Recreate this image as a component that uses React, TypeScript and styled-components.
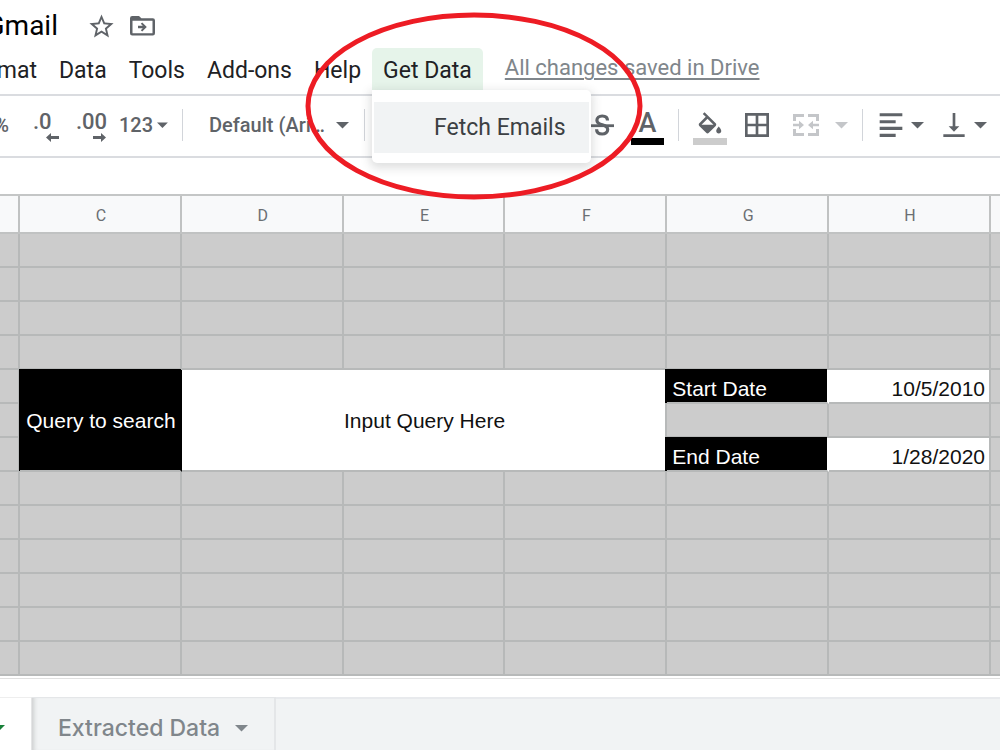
import React from 'react';
import styled, { createGlobalStyle } from 'styled-components';

const GlobalStyle = createGlobalStyle`
  *, *::before, *::after { box-sizing: border-box; }
  body { margin: 0; background: #fff; }
  button, select { font: inherit; color: inherit; background: none; border: 0; padding: 0; margin: 0; cursor: pointer; }
  svg { display: block; }
`;

const Page = styled.div`
  position: relative;
  display: flex;
  flex-direction: column;
  min-height: 100vh;
  overflow: hidden;
  font-family: Roboto, 'Liberation Sans', sans-serif;
  color: #202124;
`;

const TitleBar = styled.header`
  display: flex;
  align-items: center;
  height: 48px;
  padding-top: 4px;
`;

const Clipped = styled.div<{ $width: number }>`
  display: flex;
  justify-content: flex-end;
  flex: none;
  width: ${(p) => p.$width}px;
  overflow: hidden;
  white-space: nowrap;
`;

const Title = styled.h1`
  margin: 0;
  font-size: 28px;
  line-height: 38px;
  font-weight: 400;
  color: #000;
`;

const TitleIcons = styled.div`
  display: flex;
  align-items: center;
  gap: 14px;
  margin-left: 29px;
  color: #5f6368;
`;

const MenuBar = styled.nav`
  display: flex;
  height: 46px;
  font-size: 23px;
  line-height: 42px;
  white-space: nowrap;
`;

const MenuButton = styled.button<{ $open?: boolean }>`
  height: 42px;
  padding: 2px 11px 0;
  border-radius: 5px 5px 0 0;
  background: ${(p) => (p.$open ? '#e6f4ea' : 'none')};
`;

const MenuAnchor = styled.div`
  position: relative;
`;

const Dropdown = styled.div`
  position: absolute;
  z-index: 2;
  top: 42px;
  left: 0;
  width: 219px;
  padding: 12px 2px 10px;
  border-radius: 0 5px 5px 5px;
  background: #fff;
  box-shadow: 0 3px 10px 2px rgba(60, 64, 67, 0.17);
`;

const DropdownItem = styled.button`
  width: 100%;
  height: 51px;
  padding-left: 60px;
  background: #f1f3f4;
  color: #3c4043;
  text-align: left;
`;

const SaveStatus = styled.a`
  margin-left: 22px;
  font-size: 22px;
  line-height: 40px;
  color: #80868b;
  text-decoration: underline;
  text-decoration-thickness: 2px;
  text-underline-offset: 3px;
`;

const Toolbar = styled.div`
  display: flex;
  align-items: center;
  height: 64px;
  padding-bottom: 2px;
  border-top: 2px solid #dadce0;
  border-bottom: 2px solid #dadce0;
  font-size: 20px;
  font-weight: 500;
  color: #5f6368;
  white-space: nowrap;
`;

const ToolGroup = styled.div<{ $gap?: number; $left?: number }>`
  display: flex;
  align-items: center;
  gap: ${(p) => p.$gap ?? 0}px;
  margin-left: ${(p) => p.$left ?? 0}px;
`;

const Tool = styled.button<{ $width?: number; $muted?: boolean }>`
  display: flex;
  flex: none;
  align-items: center;
  justify-content: center;
  gap: 4px;
  height: 40px;
  width: ${(p) => (p.$width ? `${p.$width}px` : 'auto')};
  color: ${(p) => (p.$muted ? '#c4c6c9' : 'inherit')};
`;

const DecimalTool = styled(Tool)`
  flex-direction: column;
  align-items: flex-start;
  gap: 0;
  padding-top: 2px;
  font-size: 22px;
  line-height: 22px;

  svg { align-self: flex-end; }
`;

const ColorTool = styled(Tool)<{ $color: string }>`
  flex-direction: column;
  justify-content: flex-end;
  gap: 2px;
  font-size: 27px;
  line-height: 26px;

  &::after {
    content: '';
    width: 100%;
    height: 7px;
    background: ${(p) => p.$color};
  }
`;

const Divider = styled.span<{ $left?: number }>`
  flex: none;
  width: 1px;
  height: 32px;
  margin-left: ${(p) => p.$left ?? 0}px;
  background: #d2d5da;
`;

const FontPicker = styled.label`
  display: flex;
  align-items: center;
  margin-left: 26px;

  select {
    width: 127px;
    appearance: none;
    outline: 0;
  }
`;

const Grid = styled.table`
  width: 100%;
  margin-top: 36px;
  table-layout: fixed;
  border-spacing: 0;
  border-top: 2px solid #c4c6c6;
  font-size: 21px;
  line-height: 24px;

  th:last-child, td:last-child { border-right: 0; }
`;

const ColumnHead = styled.th`
  height: 38px;
  padding: 4px 0 0 2px;
  border-right: 2px solid #c0c2c2;
  border-bottom: 2px solid #c0c2c2;
  background: #f8f9fa;
  color: #6b6f73;
  font-size: 16px;
  font-weight: 400;
`;

const Cell = styled.td<{ $kind?: 'label' | 'value'; $align?: string }>`
  position: relative;
  height: 34px;
  padding: 5px 4px 0 5px;
  border-right: 2px solid #b7b9b9;
  border-bottom: 2px solid #b7b9b9;
  background: #ccc;
  font-family: 'Liberation Sans', Arial, sans-serif;
  text-align: ${(p) => p.$align ?? 'left'};
  white-space: nowrap;
  ${(p) => p.$kind === 'value' && 'background: #fff; color: #111;'}
  ${(p) => p.$kind === 'label' && 'z-index: 1; background: #000; color: #fff; box-shadow: -1px -1px 0 #000;'}
`;

const QueryLabel = styled(Cell)`
  padding: 2px 0 0 2px;
  border-right-color: #000;
`;

const QueryValue = styled(Cell)`
  padding: 2px 0 0 2px;
`;

const DateLabel = styled(Cell)`
  border-right-color: #fff;
  box-shadow: -2px -1px 0 #000;
`;

const TabBar = styled.nav`
  display: flex;
  flex: 1;
  min-height: 53px;
  margin-top: 2px;
  padding-top: 18px;
  border-top: 1px solid #e0e0e0;
  font-family: Inter, Roboto, sans-serif;
  font-size: 23px;
  font-weight: 500;
`;

const ActiveTab = styled.button`
  width: 32px;
  padding-top: 8px;
  overflow: hidden;
  border-top: 1px solid #eee;
  border-right: 1px solid #e4e5e6;
  color: #188038;

  svg { margin-left: -8px; }
`;

const SheetTab = styled.button`
  display: flex;
  align-items: center;
  gap: 15px;
  padding: 8px 26px 0;
  border: solid #e4e6e8;
  border-width: 1px 2px 0 0;
  background: #f1f3f4;
  box-shadow: inset 5px 0 4px -3px rgba(60, 64, 67, 0.2);
  color: #80868b;
`;

const TabFill = styled.div`
  flex: 1;
  border-top: 2px solid #e8eaed;
  background: #f1f3f4;
`;

const Highlight = styled.svg`
  position: absolute;
  z-index: 3;
  top: 10px;
  left: 304px;
  pointer-events: none;
`;

const Caret = () => (
  <svg width="13" height="7" viewBox="0 0 13 7" fill="currentColor" aria-hidden="true">
    <path d="M0 0h13L6.500 6.500z" />
  </svg>
);

const Arrow = ({ right }: { right?: boolean }) => (
  <svg width="13" height="9" viewBox="0 0 13 9" fill="currentColor" aria-hidden="true">
    <path d={right ? 'M13 4.500 8 0v3H0v3h8v3z' : 'M0 4.500 5 0v3H13v3H5v3z'} />
  </svg>
);

const Icon = ({ d, size = 32 }: { d: string; size?: number }) => (
  <svg width={size} height={size} viewBox="0 0 24 24" fill="currentColor" aria-hidden="true">
    <path d={d} />
  </svg>
);

const STAR =
  'M22 9.240l-7.190-.62L12 2 9.190 8.630 2 9.240l5.460 4.730L5.820 21 12 17.270 18.180 21l-1.630-7.030L22 9.240zM12 15.400l-3.760 2.270 1-4.280-3.320-2.880 4.380-.38L12 6.100l1.710 4.040 4.380.38-3.320 2.880 1 4.280L12 15.400z';
const FILL =
  'M16.560 8.940L7.620 0 6.210 1.410l2.380 2.380-5.150 5.150c-.59.59-.59 1.540 0 2.120l5.500 5.500c.29.29.68.44 1.060.44s.77-.15 1.060-.44l5.500-5.500c.59-.58.59-1.530 0-2.120zM5.210 10L10 5.210 14.790 10H5.210zM19 11.500s-2 2.170-2 3.500c0 1.100.9 2 2 2s2-.9 2-2c0-1.330-2-3.500-2-3.500z';
const BORDERS = 'M3 3v18h18V3H3zm8 16H5v-6h6v6zm0-8H5V5h6v6zm8 8h-6v-6h6v6zm0-8h-6V5h6v6z';
const ALIGN_LEFT = 'M15.500 18.600H3.500V21h12zM15.500 8.400h-12v2.300h12zM3.500 15.700h17v-2.300h-17zM3.500 5.500h17V3.200h-17z';
const ALIGN_BOTTOM = 'M16 13h-3V3h-2v10H8l4 4 4-4zM4 19v2h16v-2H4z';

const COLUMNS = ['C', 'D', 'E', 'F', 'G', 'H'];

const BlankRow = () => (
  <tr>
    {['B', ...COLUMNS, 'I'].map((c) => (
      <Cell key={c} />
    ))}
  </tr>
);

export default function App() {
  return (
    <Page>
      <GlobalStyle />
      <TitleBar>
        <Clipped $width={58}>
          <Title>Gmail</Title>
        </Clipped>
        <TitleIcons>
          <button aria-label="Star">
            <Icon d={STAR} size={29} />
          </button>
          <button aria-label="Move">
            <svg width="25" height="20" viewBox="0 0 25 20" fill="currentColor" aria-hidden="true">
              <path
                fillRule="evenodd"
                d="M2.200 0H9l2.400 2.300H22.800A2.200 2.200 0 0 1 25 4.500V17.300A2.200 2.200 0 0 1 22.800 19.500H2.200A2.200 2.200 0 0 1 0 17.300V2.200A2.200 2.200 0 0 1 2.200 0zM2.500 4.800V17.200H22.500V4.800z"
              />
              <path d="M8 9.800h4.800L10.800 7.800l1.400-1.400L16.800 11l-4.600 4.600-1.400-1.400 2-2H8z" />
            </svg>
          </button>
        </TitleIcons>
      </TitleBar>

      <MenuBar>
        <Clipped $width={48}>
          <MenuButton>Format</MenuButton>
        </Clipped>
        <MenuButton>Data</MenuButton>
        <MenuButton>Tools</MenuButton>
        <MenuButton>Add-ons</MenuButton>
        <MenuButton>Help</MenuButton>
        <MenuAnchor>
          <MenuButton $open aria-expanded="true">
            Get Data
          </MenuButton>
          <Dropdown role="menu">
            <DropdownItem role="menuitem">Fetch Emails</DropdownItem>
          </Dropdown>
        </MenuAnchor>
        <SaveStatus href="#">All changes saved in Drive</SaveStatus>
      </MenuBar>

      <Toolbar>
        <Clipped $width={9}>
          <Tool>%</Tool>
        </Clipped>
        <ToolGroup $gap={17} $left={24}>
          <DecimalTool $width={26} aria-label="Decrease decimal places">
            .0
            <Arrow />
          </DecimalTool>
          <DecimalTool $width={30} aria-label="Increase decimal places">
            .00
            <Arrow right />
          </DecimalTool>
        </ToolGroup>
        <ToolGroup $left={13}>
          <Tool $width={49}>
            123
            <Caret />
          </Tool>
        </ToolGroup>
        <Divider $left={14} />
        <FontPicker>
          <select aria-label="Font">
            <option>Default (Ari…</option>
          </select>
          <Caret />
        </FontPicker>
        <Divider $left={15} />
        <ToolGroup $left={225} $gap={17}>
          <Tool $width={24} aria-label="Strikethrough">
            <svg width="24" height="24" viewBox="0 0 24 24" aria-hidden="true">
              <path
                d="M17.500 7.500C17.500 4.500 15.500 3 12.200 3 9 3 6.900 4.700 6.900 7.200c0 2.600 2.300 3.700 5.400 4.600 3.400 1 5.400 2 5.400 4.800 0 2.700-2.200 4.400-5.500 4.400-3.500 0-5.600-1.800-5.600-4.800"
                fill="none"
                stroke="currentColor"
                strokeWidth="3.200"
              />
              <path d="M0 11.300h24v2.800H0z" fill="currentColor" />
            </svg>
          </Tool>
          <ColorTool $width={33} $color="#000">
            A
          </ColorTool>
        </ToolGroup>
        <Divider $left={14} />
        <ToolGroup $left={14} $gap={14}>
          <ColorTool $width={34} $color="#ccc" aria-label="Fill color">
            <svg width="30" height="24" viewBox="0 0 24 19" fill="currentColor" aria-hidden="true">
              <path d={FILL} />
            </svg>
          </ColorTool>
          <Tool $width={32} aria-label="Borders">
            <Icon d={BORDERS} />
          </Tool>
        </ToolGroup>
        <ToolGroup $left={20} $gap={16}>
          <Tool $width={26} $muted aria-label="Merge cells">
            <svg width="26" height="24" viewBox="0 0 26 24" fill="currentColor" aria-hidden="true">
              <path d="M0 1h11v3H3v4H0zM15 1h11v7h-3V4h-8zM0 16h3v4h8v3H0zM23 16h3v7H15v-3h8zM0 10.700h6V7.800l5 4.200-5 4.200v-2.900H0zM26 10.700h-6V7.800L15 12l5 4.200v-2.900h6z" />
            </svg>
          </Tool>
          <Tool $muted aria-label="Merge options">
            <Caret />
          </Tool>
        </ToolGroup>
        <Divider $left={14} />
        <ToolGroup $left={12} $gap={14}>
          <Tool aria-label="Horizontal align">
            <Icon d={ALIGN_LEFT} />
            <Caret />
          </Tool>
          <Tool aria-label="Vertical align">
            <Icon d={ALIGN_BOTTOM} />
            <Caret />
          </Tool>
        </ToolGroup>
      </Toolbar>

      <Grid>
        <colgroup>
          <col width="20" />
          {COLUMNS.map((c) => (
            <col key={c} />
          ))}
          <col width="9" />
        </colgroup>
        <thead>
          <tr>
            <ColumnHead />
            {COLUMNS.map((c) => (
              <ColumnHead key={c}>{c}</ColumnHead>
            ))}
            <ColumnHead />
          </tr>
        </thead>
        <tbody>
          {[1, 2, 3, 4].map((n) => (
            <BlankRow key={n} />
          ))}
          <tr>
            <Cell />
            <QueryLabel $kind="label" $align="center" rowSpan={3}>
              Query to search
            </QueryLabel>
            <QueryValue $kind="value" $align="center" rowSpan={3} colSpan={3}>
              Input Query Here
            </QueryValue>
            <DateLabel $kind="label">Start Date</DateLabel>
            <Cell $kind="value" $align="right">
              10/5/2010
            </Cell>
            <Cell />
          </tr>
          <tr>
            <Cell />
            <Cell />
            <Cell />
            <Cell />
          </tr>
          <tr>
            <Cell />
            <DateLabel $kind="label">End Date</DateLabel>
            <Cell $kind="value" $align="right">
              1/28/2020
            </Cell>
            <Cell />
          </tr>
          {[8, 9, 10, 11, 12, 13].map((n) => (
            <BlankRow key={n} />
          ))}
        </tbody>
      </Grid>

      <TabBar>
        <ActiveTab aria-label="Current sheet">
          <Caret />
        </ActiveTab>
        <SheetTab>
          Extracted Data
          <Caret />
        </SheetTab>
        <TabFill />
      </TabBar>

      <Highlight width="342" height="192" viewBox="0 0 342 192" aria-hidden="true">
        <ellipse cx="170" cy="96" rx="166" ry="91" fill="none" stroke="#ed1c24" strokeWidth="5" />
      </Highlight>
    </Page>
  );
}
